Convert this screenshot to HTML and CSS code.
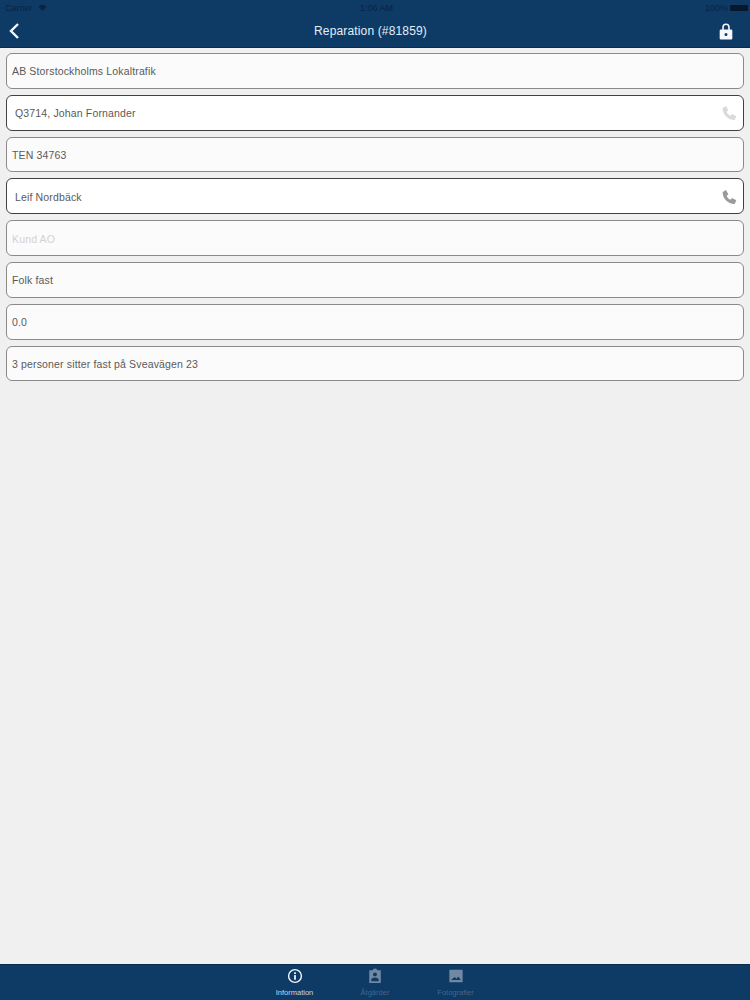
FILE: index.html
```html
<!DOCTYPE html>
<html lang="sv">
<head>
    <meta charset="UTF-8">
    <meta name="viewport" content="width=device-width, initial-scale=1.0">
    <title>Reparation (#81859)</title>
    <link rel="stylesheet" href="styles.css">
</head>
<body>

    <header class="top-bar">
        <div class="status-bar">
            <div class="status-left">
                <span>Carrier</span>
                <svg class="wifi" viewBox="0 0 12 9"><path d="M6 9 L0.5 3 A8 8 0 0 1 11.5 3 Z"/></svg>
            </div>
            <span class="status-time">1:06 AM</span>
            <div class="status-right">
                <span>100%</span>
                <span class="battery"></span>
            </div>
        </div>
        <div class="nav-bar">
            <svg class="back-icon" viewBox="0 0 12 18"><path d="M10 2 L3 9 L10 16"/></svg>
            <h1>Reparation (#81859)</h1>
            <svg class="lock-icon" viewBox="0 0 14 18"><path fill-rule="evenodd" d="M3 7 V4.5 A4 4 0 0 1 11 4.5 V7 H12.5 A1.2 1.2 0 0 1 13.7 8.2 V16.3 A1.2 1.2 0 0 1 12.5 17.5 H1.5 A1.2 1.2 0 0 1 .3 16.3 V8.2 A1.2 1.2 0 0 1 1.5 7 Z M4.7 7 H9.3 V4.5 A2.3 2.3 0 0 0 4.7 4.5 Z M7 10.6 A1.6 1.6 0 1 0 7 13.8 A1.6 1.6 0 1 0 7 10.6 Z"/></svg>
        </div>
    </header>

    <main class="form">
        <div class="field">AB Storstockholms Lokaltrafik</div>
        <div class="field field-link">
            <span>Q3714, Johan Fornander</span>
            <svg class="phone-icon phone-faint" viewBox="0 0 24 24"><path d="M2.5 4.5 L7.5 1.5 L11 8 L8.5 10.5 C10 13.5 11 14.5 14 16 L16.5 13.5 L23 17 L20.5 22.5 C10 22.5 2 14 2.5 4.5 Z"/></svg>
        </div>
        <div class="field">TEN 34763</div>
        <div class="field field-link">
            <span>Leif Nordbäck</span>
            <svg class="phone-icon" viewBox="0 0 24 24"><path d="M2.5 4.5 L7.5 1.5 L11 8 L8.5 10.5 C10 13.5 11 14.5 14 16 L16.5 13.5 L23 17 L20.5 22.5 C10 22.5 2 14 2.5 4.5 Z"/></svg>
        </div>
        <div class="field field-empty">Kund AO</div>
        <div class="field">Folk fast</div>
        <div class="field">0.0</div>
        <div class="field">3 personer sitter fast på Sveavägen 23</div>
    </main>

    <nav class="tab-bar">
        <div class="tab tab-active">
            <svg class="tab-icon" viewBox="0 0 18 18"><circle class="info-ring" cx="9" cy="9" r="7.2"/><rect x="8" y="8" width="2" height="5.2"/><rect x="8" y="4.8" width="2" height="2"/></svg>
            <span>Information</span>
        </div>
        <div class="tab">
            <svg class="tab-icon" viewBox="0 0 18 18"><path fill-rule="evenodd" d="M2.5 2.5 H6.5 A2.5 2 0 0 1 11.5 2.5 H15.5 V17 H2.5 Z M9 5 A2.2 2.2 0 1 0 9 9.4 A2.2 2.2 0 1 0 9 5 Z M4.8 14.8 H13.2 V13.4 C13.2 11.6 10.5 10.8 9 10.8 C7.5 10.8 4.8 11.6 4.8 13.4 Z"/></svg>
            <span>Åtgärder</span>
        </div>
        <div class="tab">
            <svg class="tab-icon" viewBox="0 0 18 18"><path fill-rule="evenodd" d="M1.5 2 H16.5 V16 H1.5 Z M3.5 13.5 H14.5 L11.5 9.5 L9.5 12 L7.5 10 Z"/></svg>
            <span>Fotografier</span>
        </div>
    </nav>

</body>
</html>
```
FILE: styles.css
```css
html, body {
    height: 100%;
}
body {
    font-family: 'Liberation Sans', 'Roboto', sans-serif;
    background-color: #f0f0f1;
    color: #5a5a5a;
    margin: 0;
    display: flex;
    flex-direction: column;
    overflow: hidden;
}
.top-bar {
    background-color: #0e3a66;
    border-bottom: 1px solid #0a2c50;
    height: 47px;
    display: flex;
    flex-direction: column;
    flex-shrink: 0;
}
.status-bar {
    height: 15px;
    padding: 0 2px 0 5px;
    display: grid;
    grid-template-columns: 1fr auto 1fr;
    align-items: center;
    font-size: 9px;
    color: #0a2442;
}
.status-left {
    display: flex;
    align-items: center;
    gap: 5px;
}
.status-right {
    display: flex;
    align-items: center;
    justify-content: flex-end;
    gap: 2px;
}
.wifi {
    width: 9px;
    height: 7px;
    fill: #0a2442;
}
.battery {
    width: 18px;
    height: 6px;
    background-color: #08182c;
    border-radius: 1px;
}
.nav-bar {
    flex-grow: 1;
    padding: 0 17px 0 8px;
    display: grid;
    grid-template-columns: 1fr auto 1fr;
    align-items: center;
}
.nav-bar h1 {
    margin: 0;
    font-size: 12px;
    font-weight: normal;
    letter-spacing: 0.15px;
    color: #e4eef6;
}
.back-icon {
    width: 12px;
    height: 18px;
    fill: none;
    stroke: #f4f8fb;
    stroke-width: 2.4;
}
.lock-icon {
    width: 14px;
    height: 17px;
    fill: #f4f8fb;
    justify-self: end;
}
.form {
    flex-grow: 1;
    padding: 5px 6px 0;
    display: flex;
    flex-direction: column;
    gap: 6px;
}
.field {
    height: 35.8px;
    box-sizing: border-box;
    padding: 1px 5px 0;
    display: flex;
    align-items: center;
    justify-content: space-between;
    background-color: #fbfbfb;
    border: 1px solid #8a8a8a;
    border-radius: 6px;
    font-size: 10.5px;
    letter-spacing: 0.15px;
}
.field-link {
    padding: 1px 6px 0 8px;
    background-color: #ffffff;
    border-color: #3e4146;
}
.field-empty {
    color: #d2d2d2;
}
.phone-icon {
    width: 16px;
    height: 16px;
    fill: #9b9b9b;
}
.phone-faint {
    fill: #dadada;
}
.tab-bar {
    background-color: #0e3a66;
    border-top: 1px solid #0a2c50;
    height: 36px;
    flex-shrink: 0;
    box-sizing: border-box;
    display: flex;
    justify-content: center;
    gap: 14px;
}
.tab {
    width: 66.5px;
    padding-top: 3px;
    display: flex;
    flex-direction: column;
    align-items: center;
    gap: 4px;
    font-size: 7.5px;
    color: #45668a;
}
.tab-icon {
    width: 16px;
    height: 16px;
    fill: #7088a2;
}
.tab-active {
    color: #c4d6e6;
}
.tab-active .tab-icon {
    fill: #f2f6fa;
}
.info-ring {
    fill: none;
    stroke: #f2f6fa;
    stroke-width: 1.6;
}
```
